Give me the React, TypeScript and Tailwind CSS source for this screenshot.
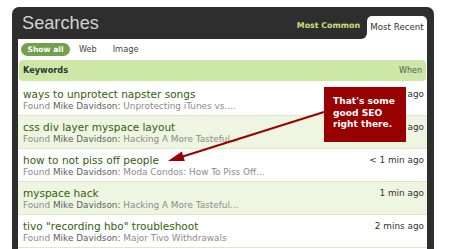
import React from "react";

type Row = { query: string; found: string; when: string };

const ROWS: Row[] = [
  { query: "ways to unprotect napster songs", found: "Unprotecting iTunes vs....", when: "< 1 min ago" },
  { query: "css div layer myspace layout", found: "Hacking A More Tasteful...", when: "< 1 min ago" },
  { query: "how to not piss off people", found: "Moda Condos: How To Piss Off...", when: "< 1 min ago" },
  { query: "myspace hack", found: "Hacking A More Tasteful...", when: "1 min ago" },
  { query: 'tivo "recording hbo" troubleshoot', found: "Major Tivo Withdrawals", when: "2 mins ago" },
];

const body = { fontFamily: '"DejaVu Sans", Verdana, sans-serif' };

function SearchRow({ row, shaded }: { row: Row; shaded: boolean }) {
  return (
    <div
      className={`flex h-[33px] justify-between border-b border-[#dbe9c6] pl-[5px] pr-[3px] pt-[4px] ${
        shaded ? "bg-[#eef6e2]" : "bg-white"
      }`}
    >
      <div className="min-w-0">
        <div className="h-[14px] text-[10.5px] leading-[14px] text-[#33600c]">{row.query}</div>
        <div className="h-[10px] whitespace-nowrap text-[8.9px] leading-[10px] text-[#8a8a8a]">
          Found <span className="text-[#5d5d5d]">Mike Davidson:</span> {row.found}
        </div>
      </div>
      <div className="h-[14px] whitespace-nowrap text-[8.9px] leading-[14px] text-[#333]">{row.when}</div>
    </div>
  );
}

export default function App() {
  return (
    <div className="relative h-[249px] w-[450px] overflow-hidden bg-white" style={body}>
      <div className="ml-[12px] mt-[7px] w-[422px] rounded-t-[7px] bg-[#2e2e2e] pb-[10px] pl-[6px] pr-[7px]">
        {/* header with tabs */}
        <div className="flex h-[32px] bg-white">
          <div className="flex flex-1 items-center justify-between rounded-br-[6px] bg-[#2e2e2e] pr-[7px]">
            <span
              className="pl-[4px] text-[18.2px] leading-none text-[#d2d2d2]"
              style={{ fontFamily: '"Liberation Sans", Arial, sans-serif' }}
            >
              Searches
            </span>
            <span className="mt-[6px] text-[7.9px] font-bold text-[#c8e07c]">Most Common</span>
          </div>
          <div className="bg-[#2e2e2e] pt-[9px]">
            <div className="flex h-[23px] w-[60px] items-center justify-center rounded-t-[5px] bg-white text-[8.7px] text-[#333]">
              Most Recent
            </div>
          </div>
        </div>

        {/* content */}
        <div className="h-[220px] bg-white">
          <div className="flex h-[21px] items-center gap-[9px] pl-[3px]">
            <span className="flex h-[13px] w-[49px] items-center justify-center rounded-full bg-[#74a04b] text-[7.6px] font-bold text-white">
              Show all
            </span>
            <span className="text-[8.1px] text-[#444]">Web</span>
            <span className="ml-[7px] text-[8.3px] text-[#444]">Image</span>
          </div>
          <div className="mx-[1px] mb-[2px] flex h-[21px] items-center justify-between rounded-[4px] bg-[#cde8a6] pl-[4px] pr-[4px]">
            <span className="text-[8.2px] font-bold text-[#333]">Keywords</span>
            <span className="text-[8px] text-[#555]">When</span>
          </div>
          {ROWS.map((row, i) => (
            <SearchRow key={i} row={row} shaded={i % 2 === 1} />
          ))}
        </div>
      </div>

      {/* annotation */}
      <svg className="absolute left-0 top-0" width="450" height="249">
        <line x1="324" y1="112" x2="178" y2="158" stroke="#990000" strokeWidth="2" />
        <polygon points="168,161 184.8,161 181.8,151.4" fill="#990000" />
      </svg>
      <div className="absolute left-[324px] top-[87px] h-[55px] w-[82px] bg-[#990000] pl-[9px] pt-[9px] text-[9.1px] font-bold leading-[11.5px] text-white">
        That's some
        <br />
        good SEO
        <br />
        right there.
      </div>
    </div>
  );
}
